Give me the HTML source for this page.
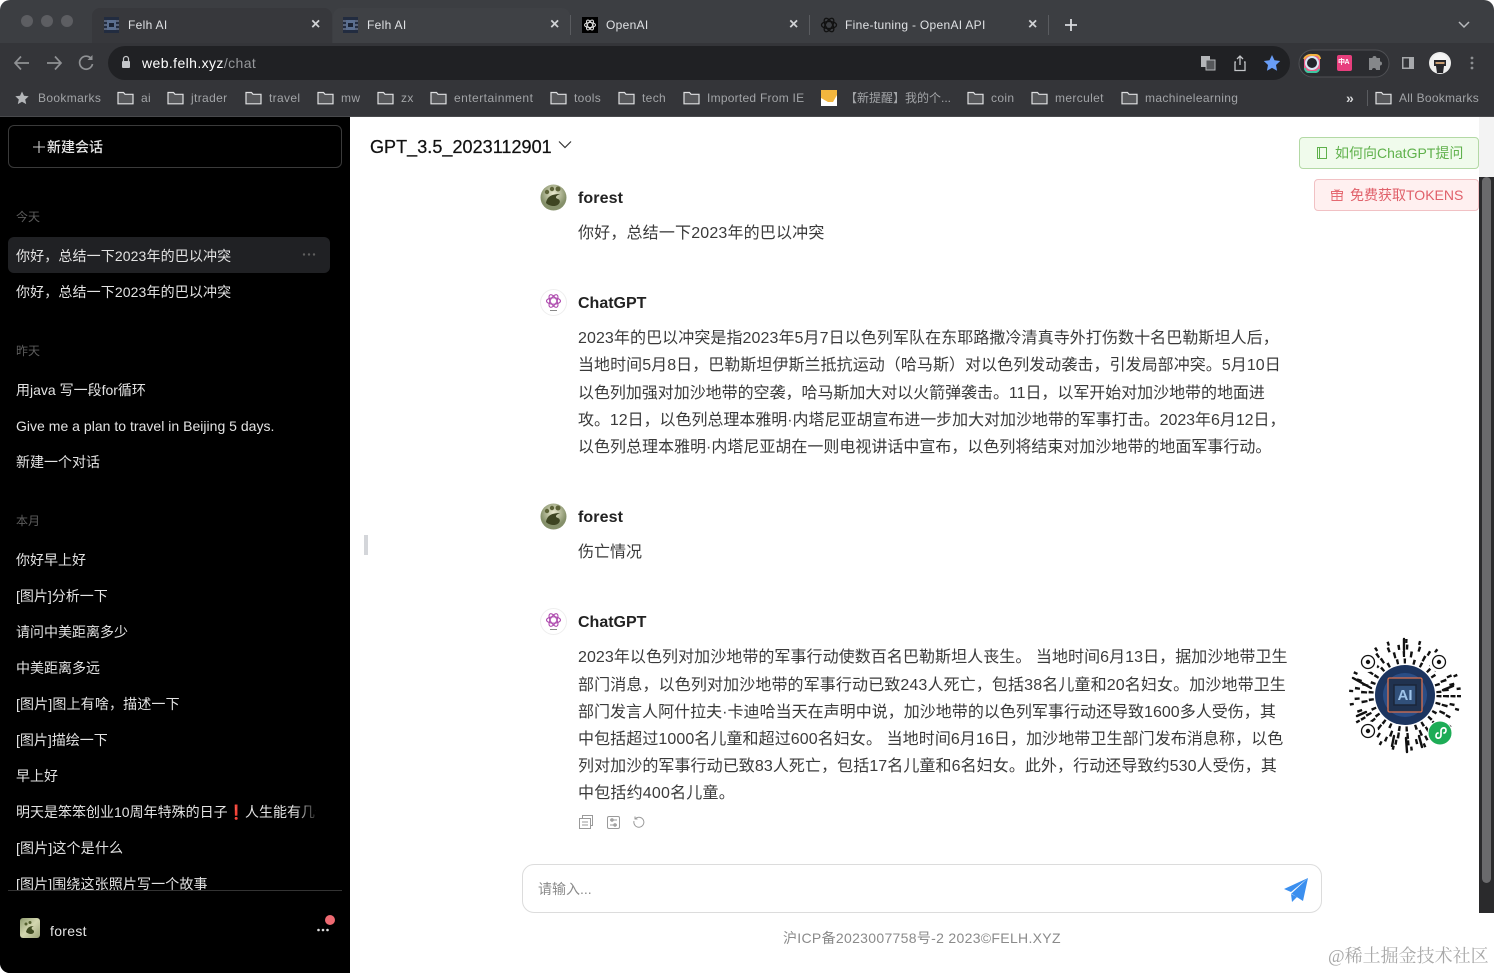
<!DOCTYPE html>
<html lang="zh"><head><meta charset="utf-8"><title>Felh AI</title>
<style>
*{box-sizing:border-box}
html,body{margin:0;padding:0;width:1494px;height:973px;overflow:hidden;background:#fff}
body{position:relative;font-family:"Liberation Sans","Noto Sans CJK SC",sans-serif}
.a{position:absolute;white-space:nowrap}
.t{position:absolute;white-space:nowrap;height:20px;line-height:20px}
#strip{left:0;top:0;width:1494px;height:43px;background:#3c3e42;border-radius:10px 10px 0 0}
#tool{left:0;top:43px;width:1494px;height:37px;background:#343539}
#bm{left:0;top:80px;width:1494px;height:37px;background:#343539;border-bottom:1px solid #48494c}
.tab{font-size:12px;color:#dfe1e4;top:15px;letter-spacing:.3px}
.x{font-size:16px;color:#d0d2d5;top:15px;font-weight:bold}
.div{position:absolute;width:1px;height:20px;top:15px;background:#5a5c60}
.b{font-size:12px;color:#a2a4a7;top:88px;letter-spacing:.35px}
.s{font-size:14px;color:#e3e3e3}
.h{font-size:12px;color:#5d5d5d}
.m{font-size:16px;color:#3a3a3a;left:578px;height:27px;line-height:27px}
.n{font-size:16px;font-weight:bold;color:#222;left:578px}
</style></head>
<body>
<div class="a" id="strip"></div>
<div class="a" style="left:92px;top:8px;width:240px;height:35px;background:#37383c;border-radius:8px 8px 0 0"></div>
<div class="a" style="left:333px;top:8px;width:237px;height:35px;background:#3f4145;border-radius:8px 8px 0 0"></div>
<div class="a" id="tool"></div>
<div class="a" id="bm"></div>

<svg class="a" style="left:0;top:0" width="1494" height="117" fill="none">
 <circle cx="27" cy="21" r="6" fill="#5d5e62"/><circle cx="47" cy="21" r="6" fill="#5d5e62"/><circle cx="67" cy="21" r="6" fill="#5d5e62"/>
 <!-- favicons -->
 <g>
  <rect x="104" y="17" width="15" height="16" fill="#222c40"/><rect x="107" y="20" width="9" height="10" fill="#5b6f90"/><rect x="109" y="23" width="5" height="4" fill="#1b2333"/>
  <path d="M104 21h3M116 21h3M104 25h3M116 25h3M104 29h3M116 29h3" stroke="#8d9ab3"/>
 </g>
 <g>
  <rect x="343" y="17" width="15" height="16" fill="#222c40"/><rect x="346" y="20" width="9" height="10" fill="#5b6f90"/><rect x="348" y="23" width="5" height="4" fill="#1b2333"/>
  <path d="M343 21h3M355 21h3M343 25h3M355 25h3M343 29h3M355 29h3" stroke="#8d9ab3"/>
 </g>
 <rect x="582" y="17" width="16" height="16" fill="#000"/>
 <g stroke="#ddd" stroke-width="1"><ellipse cx="590" cy="25" rx="5.500" ry="2.500"/><ellipse cx="590" cy="25" rx="5.500" ry="2.500" transform="rotate(60 590 25)"/><ellipse cx="590" cy="25" rx="5.500" ry="2.500" transform="rotate(120 590 25)"/></g>
 <g stroke="#111" stroke-width="1.300"><ellipse cx="829" cy="25" rx="7.500" ry="3.500"/><ellipse cx="829" cy="25" rx="7.500" ry="3.500" transform="rotate(60 829 25)"/><ellipse cx="829" cy="25" rx="7.500" ry="3.500" transform="rotate(120 829 25)"/></g>
 <path d="M1071 19v12M1065 25h12" stroke="#d8dadd" stroke-width="1.800"/>
 <path d="M1459 22l5 5 5-5" stroke="#b8babd" stroke-width="1.500"/>
 <!-- nav -->
 <path d="M29 63H15M21 56.500L15 63l6 6.500" stroke="#8f9194" stroke-width="1.700"/>
 <path d="M47 63h14M55 56.500l6 6.500-6 6.500" stroke="#8f9194" stroke-width="1.700"/>
 <path d="M91.500 59a6.500 6.500 0 1 0 1 5" stroke="#8f9194" stroke-width="1.700"/><path d="M92.500 55v5h-5z" fill="#8f9194"/>
 <!-- url bar -->
 <rect x="108" y="46" width="1182" height="34" rx="17" fill="#202124"/>
 <rect x="122" y="61" width="8" height="7" rx="1" fill="#c4c6c9"/><path d="M123.500 61v-2a2.500 2.500 0 0 1 5 0v2" stroke="#c4c6c9" stroke-width="1.200"/>
 <!-- right icons -->
 <rect x="1201" y="56" width="9" height="11" fill="#b4b6b9"/><rect x="1206" y="60" width="9" height="10" fill="#55575a" stroke="#b4b6b9"/>
 <path d="M1236 62h-1v8.500h10v-8.500h-1M1240 65v-9M1237 59l3-3 3 3" stroke="#c4c6c9" stroke-width="1.300"/>
 <path d="M1272 55l2.500 5.300 5.700.7-4.200 4 1.100 5.700-5.100-2.800-5.100 2.800 1.100-5.700-4.200-4 5.700-.7z" fill="#699df6"/>
 <rect x="1299" y="50" width="90" height="27" rx="13.500" fill="#2b2c30" stroke="#4f5054"/>
 <rect x="1304" y="55" width="16" height="17" rx="4" fill="#e95f8c"/><circle cx="1312" cy="63" r="6" fill="#23242a" stroke="#d8e6f2" stroke-width="2"/>
 <path d="M1304 59a8 8 0 0 1 8-4h4a4 4 0 0 1 4 4" stroke="#f2b13d" stroke-width="2"/><path d="M1305 68a4 4 0 0 0 3 4h8a4 4 0 0 0 3-3" stroke="#3fc6a0" stroke-width="2"/>
 <rect x="1337" y="55" width="15" height="16" rx="2" fill="#e73f7d"/>
 <path d="M1369 58h3.500a2 2 0 0 1 4 0h3.500v3.500a2 2 0 0 1 0 4v4.500h-4a2 2 0 0 0-4 0h-3z" fill="#85878a"/>
 <rect x="1402" y="57" width="12" height="12" fill="#a7a9ac"/><rect x="1403.500" y="58.500" width="5.500" height="9" fill="#343539"/>
 <circle cx="1440" cy="63" r="11" fill="#eee"/><rect x="1434" y="60" width="12" height="6" fill="#26262a"/><rect x="1435.500" y="62" width="9" height="2" fill="#c79c72"/><path d="M1436 66h8l-1 7h-6z" fill="#26262a"/><path d="M1433 58a8 8 0 0 1 14 0l-1 2h-12z" fill="#f5f5f5"/>
 <g fill="#8d8f92"><circle cx="1472" cy="58" r="1.400"/><circle cx="1472" cy="63" r="1.400"/><circle cx="1472" cy="68" r="1.400"/></g>
 <!-- bookmarks -->
 <path d="M22 91.500l2 4.300 4.700.5-3.500 3.200 1 4.600-4.200-2.400-4.200 2.400 1-4.600-3.500-3.200 4.700-.5z" fill="#b4b6b9"/>
 <g stroke="#dfe0e2" stroke-width="1.200" fill="#56575a">
  <path d="M118 92.500h5.500l1.500 1.800h8v9.500h-15z"/>
  <path d="M168 92.500h5.500l1.500 1.800h8v9.500h-15z"/>
  <path d="M246 92.500h5.500l1.500 1.800h8v9.500h-15z"/>
  <path d="M318 92.500h5.500l1.500 1.800h8v9.500h-15z"/>
  <path d="M378 92.500h5.500l1.500 1.800h8v9.500h-15z"/>
  <path d="M431 92.500h5.500l1.500 1.800h8v9.500h-15z"/>
  <path d="M551 92.500h5.500l1.500 1.800h8v9.500h-15z"/>
  <path d="M619 92.500h5.500l1.500 1.800h8v9.500h-15z"/>
  <path d="M684 92.500h5.500l1.500 1.800h8v9.500h-15z"/>
  <path d="M968 92.500h5.500l1.500 1.800h8v9.500h-15z"/>
  <path d="M1032 92.500h5.500l1.500 1.800h8v9.500h-15z"/>
  <path d="M1122 92.500h5.500l1.500 1.800h8v9.500h-15z"/>
  <path d="M1376 92.500h5.500l1.500 1.800h8v9.500h-15z"/>
 </g>
 <rect x="821" y="90" width="16" height="16" fill="#fff"/><path d="M821 90h16v5l-4 7h-5l-7-4z" fill="#f3b63e"/>
 <rect x="1367" y="90" width="1" height="16" fill="#5a5c60"/>
</svg>

<div class="t" style="left:1338px;top:53px;font-size:7px;font-weight:bold;color:#fff;letter-spacing:-.5px">中A</div>

<div class="t tab" style="left:128px">Felh AI</div><div class="t x" style="left:311px">×</div>
<div class="t tab" style="left:367px">Felh AI</div><div class="t x" style="left:550px">×</div>
<div class="div" style="left:570px"></div>
<div class="t tab" style="left:606px">OpenAI</div><div class="t x" style="left:789px">×</div>
<div class="div" style="left:809px"></div>
<div class="t tab" style="left:845px">Fine-tuning - OpenAI API</div><div class="t x" style="left:1028px">×</div>
<div class="div" style="left:1048px"></div>

<div class="t" style="left:142px;top:53px;font-size:14px;color:#fff;letter-spacing:.4px">web.felh.xyz<span style="color:#96989b">/chat</span></div>

<div class="t b" style="left:38px">Bookmarks</div>
<div class="t b" style="left:141px">ai</div>
<div class="t b" style="left:191px">jtrader</div>
<div class="t b" style="left:269px">travel</div>
<div class="t b" style="left:341px">mw</div>
<div class="t b" style="left:401px">zx</div>
<div class="t b" style="left:454px;letter-spacing:.46px">entertainment</div>
<div class="t b" style="left:574px">tools</div>
<div class="t b" style="left:642px">tech</div>
<div class="t b" style="left:707px;letter-spacing:.25px">Imported From IE</div>
<div class="t b" style="left:845px;letter-spacing:0">【新提醒】我的个...</div>
<div class="t b" style="left:991px">coin</div>
<div class="t b" style="left:1055px">merculet</div>
<div class="t b" style="left:1145px">machinelearning</div>
<div class="t b" style="left:1346px;color:#d5d6d8;font-size:14px;font-weight:bold">»</div>
<div class="t b" style="left:1399px;letter-spacing:.25px">All Bookmarks</div>

<!-- sidebar -->
<div class="a" style="left:0;top:117px;width:350px;height:856px;background:#000;border-radius:0 0 0 10px;overflow:hidden">
 <div class="a" style="left:8px;top:8px;width:334px;height:43px;border:1px solid #3a3a3a;border-radius:6px"></div>
 <svg class="a" style="left:32px;top:23px" width="14" height="14"><path d="M7 1v12M1 7h12" stroke="#ccc" stroke-width="1.100"/></svg>
 <div class="t" style="left:47px;top:20px;font-size:14px;font-weight:500;color:#e6e6e6">新建会话</div>
 <div class="a" style="left:8px;top:120px;width:322px;height:36px;background:#202124;border-radius:6px"></div>
 <svg class="a" style="left:302px;top:135px" width="14" height="5"><g fill="#5e5e5e"><circle cx="2" cy="2.500" r="1.200"/><circle cx="7" cy="2.500" r="1.200"/><circle cx="12" cy="2.500" r="1.200"/></g></svg>

 <div class="t h" style="left:16px;top:90px">今天</div>
 <div class="t s" style="left:16px;top:129px;letter-spacing:.12px">你好，总结一下2023年的巴以冲突</div>
 <div class="t s" style="left:16px;top:165px;letter-spacing:.12px">你好，总结一下2023年的巴以冲突</div>
 <div class="t h" style="left:16px;top:224px">昨天</div>
 <div class="t s" style="left:16px;top:263px">用java 写一段for循环</div>
 <div class="t s" style="left:16px;top:299px;letter-spacing:.02px">Give me a plan to travel in Beijing 5 days.</div>
 <div class="t s" style="left:16px;top:335px">新建一个对话</div>
 <div class="t h" style="left:16px;top:394px">本月</div>
 <div class="t s" style="left:16px;top:433px">你好早上好</div>
 <div class="t s" style="left:16px;top:469px">[图片]分析一下</div>
 <div class="t s" style="left:16px;top:505px">请问中美距离多少</div>
 <div class="t s" style="left:16px;top:541px">中美距离多远</div>
 <div class="t s" style="left:16px;top:577px;letter-spacing:.15px">[图片]图上有啥，描述一下</div>
 <div class="t s" style="left:16px;top:613px">[图片]描绘一下</div>
 <div class="t s" style="left:16px;top:649px">早上好</div>
 <div class="t s" style="left:16px;top:685px;width:300px;overflow:hidden">明天是笨笨创业10周年特殊的日子<span style="color:#d9232e;font-family:'DejaVu Sans',sans-serif;font-weight:bold">❗</span>人生能有几个</div>
 <div class="a" style="left:296px;top:685px;width:24px;height:20px;background:linear-gradient(90deg,rgba(0,0,0,0),#000)"></div>
 <div class="t s" style="left:16px;top:721px;letter-spacing:.15px">[图片]这个是什么</div>
 <div class="t s" style="left:16px;top:757px;letter-spacing:.12px">[图片]围绕这张照片写一个故事</div>

 <div class="a" style="left:0;top:773px;width:350px;height:83px;background:#000"></div>
 <div class="a" style="left:8px;top:773px;width:334px;height:1px;background:#333"></div>
 <svg class="a" style="left:20px;top:801px" width="20" height="20"><defs><linearGradient id="g" x1="0" y1="0" x2="1" y2="1"><stop offset="0" stop-color="#8d9a6d"/><stop offset=".5" stop-color="#d4d7b0"/><stop offset="1" stop-color="#9aa276"/></linearGradient></defs><rect width="20" height="20" rx="3" fill="url(#g)"/><path d="M6 14c1-4 3-6 8-6-3 1-3 3-1 4 2 1 1 4-2 4-2 0-4-1-5-2z" fill="#3f4a20"/><circle cx="6" cy="6" r="1.500" fill="#55602f"/><circle cx="10" cy="4.500" r="1.500" fill="#55602f"/></svg>
 <div class="t" style="left:50px;top:804px;font-size:14px;color:#e3e3e3;letter-spacing:.3px">forest</div>
 <svg class="a" style="left:310px;top:794px" width="30" height="30"><circle cx="20" cy="9" r="5" fill="#ee6a72"/><g fill="#ddd"><circle cx="8.500" cy="19" r="1.300"/><circle cx="13" cy="19" r="1.300"/><circle cx="17.500" cy="19" r="1.300"/></g></svg>
</div>

<!-- main header -->
<div class="t" style="left:370px;top:136px;font-size:18px;font-weight:500;color:#111;height:22px;line-height:22px;letter-spacing:.05px;-webkit-text-stroke:.25px #111">GPT_3.5_2023112901</div>
<svg class="a" style="left:558px;top:140px" width="14" height="10" fill="none"><path d="M1 1.500l6 6 6-6" stroke="#333" stroke-width="1.200"/></svg>

<!-- buttons -->
<div class="a" style="left:1299px;top:137px;width:180px;height:32px;background:#f0fbec;border:1px solid #b3d9a5;border-radius:4px"></div>
<svg class="a" style="left:1315px;top:146px" width="14" height="14" fill="none"><path d="M2.500 1.500h9v11h-9zM4.500 1.500v11" stroke="#5fb14b"/></svg>
<div class="t" style="left:1335px;top:143px;font-size:14px;color:#5fb14b">如何向ChatGPT提问</div>
<div class="a" style="left:1314px;top:179px;width:165px;height:32px;background:#fff0f0;border:1px solid #f1c1c4;border-radius:4px"></div>
<svg class="a" style="left:1330px;top:188px" width="14" height="14" fill="none"><path d="M2 5.500h10v7H2zM1.500 3.500h11v2h-11zM7 1.500v11M2 8.500h10M4.500 1.500l2.500 2 2.500-2" stroke="#e56a72"/></svg>
<div class="t" style="left:1350px;top:185px;font-size:14px;color:#e0606a">免费获取TOKENS</div>

<!-- scrollbar -->
<div class="a" style="left:1479px;top:117px;width:15px;height:60px;background:#f3f3f3"></div>
<div class="a" style="left:1479px;top:177px;width:15px;height:736px;background:#2a2a2c"></div>
<div class="a" style="left:1482px;top:177px;width:9px;height:706px;background:#6a6a6c;border-radius:5px"></div>
<div class="a" style="left:364px;top:535px;width:4px;height:20px;background:#d4d6da"></div>

<!-- avatars -->
<svg class="a" style="left:540px;top:184px" width="27" height="27"><defs><radialGradient id="r" cx=".5" cy=".35"><stop offset="0" stop-color="#ecebd0"/><stop offset="1" stop-color="#85906a"/></radialGradient></defs><circle cx="13.500" cy="13.500" r="13" fill="url(#r)"/><path d="M6 19c1-6 5-9 14-9-5 2-5 4-2 5 4 2 1 7-4 7-3 0-6-1-8-3z" fill="#3e4522"/><g fill="#5d6338"><circle cx="7" cy="8" r="2.200"/><circle cx="12" cy="5" r="2.200"/><circle cx="18" cy="5" r="2.500"/></g></svg>
<svg class="a" style="left:540px;top:503px" width="27" height="27"><circle cx="13.500" cy="13.500" r="13" fill="url(#r)"/><path d="M6 19c1-6 5-9 14-9-5 2-5 4-2 5 4 2 1 7-4 7-3 0-6-1-8-3z" fill="#3e4522"/><g fill="#5d6338"><circle cx="7" cy="8" r="2.200"/><circle cx="12" cy="5" r="2.200"/><circle cx="18" cy="5" r="2.500"/></g></svg>
<svg class="a" style="left:540px;top:289px" width="27" height="27" fill="none"><circle cx="13.500" cy="13.500" r="13" fill="#fff" stroke="#eee"/><g stroke="#ae4bae" stroke-width="1.100"><ellipse cx="13.500" cy="12" rx="7" ry="3.200"/><ellipse cx="13.500" cy="12" rx="7" ry="3.200" transform="rotate(60 13.500 12)"/><ellipse cx="13.500" cy="12" rx="7" ry="3.200" transform="rotate(120 13.500 12)"/></g><path d="M10 21.500h7" stroke="#888"/></svg>
<svg class="a" style="left:540px;top:608px" width="27" height="27" fill="none"><circle cx="13.500" cy="13.500" r="13" fill="#fff" stroke="#eee"/><g stroke="#ae4bae" stroke-width="1.100"><ellipse cx="13.500" cy="12" rx="7" ry="3.200"/><ellipse cx="13.500" cy="12" rx="7" ry="3.200" transform="rotate(60 13.500 12)"/><ellipse cx="13.500" cy="12" rx="7" ry="3.200" transform="rotate(120 13.500 12)"/></g><path d="M10 21.500h7" stroke="#888"/></svg>

<!-- messages -->
<div class="t n" style="top:189px;letter-spacing:.1px">forest</div>
<div class="a m" style="top:220px;letter-spacing:.17px">你好，总结一下2023年的巴以冲突</div>
<div class="t n" style="top:294px">ChatGPT</div>
<div class="a m" style="top:325px;letter-spacing:.08px">2023年的巴以冲突是指2023年5月7日以色列军队在东耶路撒冷清真寺外打伤数十名巴勒斯坦人后，</div>
<div class="a m" style="top:352px;letter-spacing:.05px">当地时间5月8日，巴勒斯坦伊斯兰抵抗运动（哈马斯）对以色列发动袭击，引发局部冲突。5月10日</div>
<div class="a m" style="top:380px;letter-spacing:-.04px">以色列加强对加沙地带的空袭，哈马斯加大对以火箭弹袭击。11日，以军开始对加沙地带的地面进</div>
<div class="a m" style="top:407px;letter-spacing:-.04px">攻。12日，以色列总理本雅明·内塔尼亚胡宣布进一步加大对加沙地带的军事打击。2023年6月12日，</div>
<div class="a m" style="top:434px">以色列总理本雅明·内塔尼亚胡在一则电视讲话中宣布，以色列将结束对加沙地带的地面军事行动。</div>
<div class="t n" style="top:508px;letter-spacing:.1px">forest</div>
<div class="a m" style="top:539px">伤亡情况</div>
<div class="t n" style="top:613px">ChatGPT</div>
<div class="a m" style="top:644px;letter-spacing:.06px">2023年以色列对加沙地带的军事行动使数百名巴勒斯坦人丧生。 当地时间6月13日，据加沙地带卫生</div>
<div class="a m" style="top:672px;letter-spacing:.12px">部门消息，以色列对加沙地带的军事行动已致243人死亡，包括38名儿童和20名妇女。加沙地带卫生</div>
<div class="a m" style="top:699px;letter-spacing:.02px">部门发言人阿什拉夫·卡迪哈当天在声明中说，加沙地带的以色列军事行动还导致1600多人受伤，其</div>
<div class="a m" style="top:726px;letter-spacing:.08px">中包括超过1000名儿童和超过600名妇女。 当地时间6月16日，加沙地带卫生部门发布消息称，以色</div>
<div class="a m" style="top:753px;letter-spacing:.08px">列对加沙的军事行动已致83人死亡，包括17名儿童和6名妇女。此外，行动还导致约530人受伤，其</div>
<div class="a m" style="top:780px;letter-spacing:.2px">中包括约400名儿童。</div>

<svg class="a" style="left:578px;top:813px" width="70" height="18" fill="none" stroke="#9a9a9a">
 <path d="M1.500 5.500h11v10h-11zM4.500 5.500v-3h10v10h-2M4 9h6M4 12h6"/>
 <rect x="29.500" y="3.500" width="12" height="12" rx="1.500"/><path d="M32 7h7M32 12h7"/><circle cx="34" cy="7" r="1.200"/><circle cx="37" cy="12" r="1.200"/>
 <path d="M57.500 5.500a5 5 0 1 1-1.500 2.500M57 3.500v2.500h2.500"/>
</svg>

<!-- QR -->
<svg class="a" style="left:1345px;top:636px" width="122" height="122" fill="none" stroke="#111" stroke-linecap="round">
 <g stroke-linecap="butt">
  <circle cx="60" cy="59" r="34" stroke-width="5" stroke-dasharray="2.400 5 2.400 7"/>
  <circle cx="60" cy="59" r="41" stroke-width="6" stroke-dasharray="2.400 7 2.400 5 2.400 11"/>
  <circle cx="60" cy="59" r="48" stroke-width="5" stroke-dasharray="2.400 6 2.400 10 2.400 8"/>
  <circle cx="60" cy="59" r="54" stroke-width="4" stroke-dasharray="2.400 11 2.400 16"/>
 </g>
 <g stroke-width="2.400">
  <path d="M59 3v11M8 42l18 10M20 18l12 12M100 20l-8 9M12 80l9-4M61 102l1 14M49 100l-2 10M74 100l3 11M108 50l-10 4"/>
 </g>
 <circle cx="23" cy="26" r="10" fill="#fff" stroke="none"/><circle cx="94" cy="26" r="10" fill="#fff" stroke="none"/><circle cx="23" cy="95" r="10" fill="#fff" stroke="none"/>
 <g stroke-width="1.300"><circle cx="23" cy="26" r="6.500"/><circle cx="94" cy="26" r="6.500"/><circle cx="23" cy="95" r="6.500"/></g>
 <g fill="#111" stroke="none"><circle cx="23" cy="26" r="2.200"/><circle cx="94" cy="26" r="2.200"/><circle cx="23" cy="95" r="2.200"/></g>
 <circle cx="60" cy="59" r="30" fill="#1c3560" stroke="none"/>
 <circle cx="60" cy="59" r="22" fill="#2a4d85" stroke="none"/>
 <rect x="43" y="42" width="34" height="34" rx="1.500" fill="#20324f" stroke="#d9714f" stroke-width="1.300"/>
 <rect x="49" y="49" width="22" height="20" fill="#31507a" stroke="#1a2538" stroke-width="1.500"/>
 <text x="60" y="64" text-anchor="middle" font-size="15" font-weight="bold" fill="#9fc4ea" stroke="none" font-family="Liberation Sans">AI</text>
 <circle cx="95" cy="97" r="12" fill="#1dac56" stroke="#fff" stroke-width="1"/>
 <path d="M91 100c0 3 5 3 5-1v-4c0-4 5-4 5-1M91 100c0-2 1-3 2-3M101 94c0 2-1 3-2 3" stroke="#fff" stroke-width="1.700"/>
</svg>

<!-- input -->
<div class="a" style="left:522px;top:864px;width:800px;height:49px;border:1px solid #dcdcdc;border-radius:12px;background:#fff"></div>
<div class="t" style="left:538px;top:879px;font-size:14px;color:#8b8b8b">请输入...</div>
<svg class="a" style="left:1283px;top:876px" width="27" height="26"><path d="M25 2L1 13l7 3zM25 2L9 17l-1 1 1 0 11 7z" fill="#3b8fef"/><path d="M8 18l1 8 5-5-6-3z" fill="#3b8fef"/></svg>

<div class="t" style="left:783px;top:928px;font-size:14px;color:#8a8a8a;letter-spacing:.31px">沪ICP备2023007758号-2 2023©FELH.XYZ</div>
<div class="t" style="left:1328px;top:945px;font-size:18px;color:#a8a8a8;font-family:'Liberation Serif','Noto Serif CJK SC',serif;height:22px;line-height:22px">@稀土掘金技术社区</div>
</body></html>
